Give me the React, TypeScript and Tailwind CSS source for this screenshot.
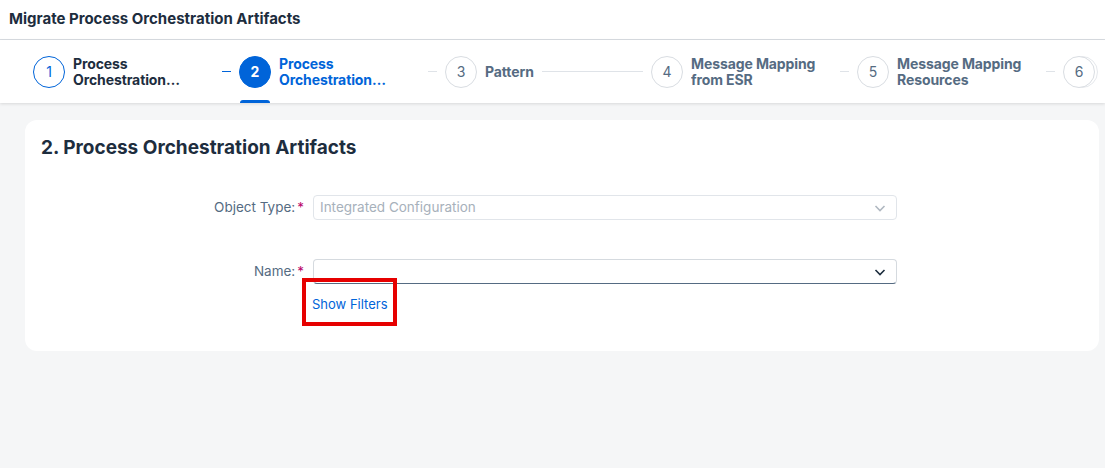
import React from 'react';

type Step = { n: number; label: string; state: 'done' | 'active' | 'todo' };

const steps: Step[] = [
  { n: 1, label: 'Process Orchestration Artifacts', state: 'done' },
  { n: 2, label: 'Process Orchestration Artifacts', state: 'active' },
  { n: 3, label: 'Pattern', state: 'todo' },
  { n: 4, label: 'Message Mapping from ESR', state: 'todo' },
  { n: 5, label: 'Message Mapping Resources', state: 'todo' },
];

const Chevron = ({ className }: { className: string }) => (
  <svg viewBox="0 0 16 16" className={className} fill="none" stroke="currentColor" strokeWidth="1.6">
    <path d="M3.5 6l4.5 4.5L12.5 6" />
  </svg>
);

const StepItem = ({ step, nextActive }: { step: Step; nextActive: boolean }) => {
  const circle =
    step.state === 'active'
      ? 'bg-[#0064d9] text-white font-bold border-[#0064d9]'
      : step.state === 'done'
      ? 'bg-white text-[#0064d9] border-[#0064d9]'
      : 'bg-white text-[#556b82] border-[#d9dde2]';
  const text =
    step.state === 'active' ? 'text-[#0064d9]' : step.state === 'done' ? 'text-[#1d2d3e]' : 'text-[#556b82]';
  return (
    <div className="flex w-[206px] flex-none items-center">
      <div className="relative flex h-full items-center">
        <div className={`flex h-8 w-8 flex-none items-center justify-center rounded-full border text-[14px] ${circle}`}>
          {step.n}
        </div>
        {step.state === 'active' && (
          <span className="absolute bottom-0 left-px h-[3px] w-[30px] rounded-t-sm bg-[#0064d9]" />
        )}
      </div>
      <span className={`ml-2 line-clamp-2 max-w-[141px] pt-px text-[14px] font-bold leading-[16px] tracking-[-0.1px] ${text}`}>
        {step.label}
      </span>
      <span className={`mx-2 h-px min-w-[9px] flex-1 ${nextActive ? 'bg-[#0064d9]' : 'bg-[#dfe3e8]'}`} />
    </div>
  );
};

export default function App() {
  return (
    <div className="flex h-[468px] w-full flex-col overflow-hidden bg-[#f5f6f7] font-['Inter',sans-serif]">
      <header className="flex h-10 flex-none items-center border-b border-[#d9dde2] bg-white px-[9px]">
        <h1 className="text-[15px] font-bold text-[#1d2d3e]">Migrate Process Orchestration Artifacts</h1>
      </header>

      <nav className="relative z-10 flex h-[63px] flex-none items-stretch overflow-hidden bg-white pl-[33px] shadow-[0_1px_3px_rgba(0,0,0,0.12)]">
        {steps.map((s, i) => (
          <StepItem key={s.n} step={s} nextActive={steps[i + 1]?.state === 'active'} />
        ))}
        <div className="relative flex flex-none items-center">
          <div className="absolute left-[3px] h-8 w-8 rounded-full border border-[#e5e8ec] bg-white" />
          <div className="relative flex h-8 w-8 items-center justify-center rounded-full border border-[#d9dde2] bg-white text-[14px] text-[#556b82]">
            6
          </div>
        </div>
      </nav>

      <main className="pl-[25px] pr-[6px] pt-[17px]">
        <section className="h-[231px] rounded-xl bg-white px-4 pt-[14px]">
          <h2 className="text-[19px] font-bold leading-7 text-[#1d2d3e]">2. Process Orchestration Artifacts</h2>

          <div className="mt-[33px] flex items-center">
            <label className="w-[263px] text-right text-[13.5px] text-[#556b82]">
              Object Type:<span className="ml-[2px] text-[#ba066c]">*</span>
            </label>
            <div className="ml-[9px] flex h-[25px] w-[584px] items-center rounded border border-[#e1e5ea] bg-white pl-[6px] pr-2 text-[13.5px] text-[#a7b1bb]">
              <span className="flex-1">Integrated Configuration</span>
              <Chevron className="h-4 w-4 text-[#b0b8c1]" />
            </div>
          </div>

          <div className="mt-[39px] flex items-center">
            <label className="w-[263px] text-right text-[13.5px] text-[#556b82]">
              Name:<span className="ml-[2px] text-[#ba066c]">*</span>
            </label>
            <div className="ml-[9px] flex h-[25px] w-[584px] items-center rounded border border-[#d5dadf] border-b-[#556b82] bg-white pr-2">
              <span className="flex-1" />
              <Chevron className="h-4 w-4 text-[#1d2d3e]" />
            </div>
          </div>

          <div className="relative ml-[271px] mt-[7px] w-fit">
            <a className="text-[13px] leading-5 text-[#0064d9]">Show Filters</a>
            <span className="absolute -bottom-[11px] -left-[10px] -right-[9px] -top-[13px] border-4 border-[#e60000]" />
          </div>
        </section>
      </main>
    </div>
  );
}
